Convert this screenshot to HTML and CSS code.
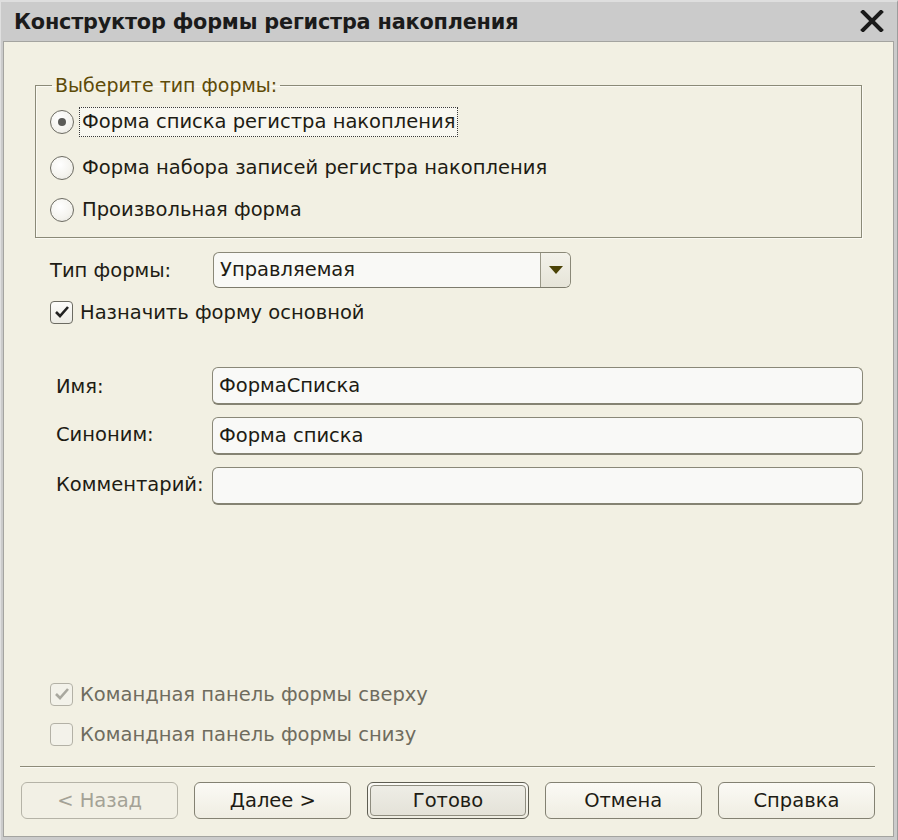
FILE: index.html
```html
<!DOCTYPE html>
<html lang="ru">
<head>
<meta charset="utf-8">
<title>Конструктор формы регистра накопления</title>
<link rel="stylesheet" href="styles.css">
</head>
<body>
<div class="window">
  <div class="titlebar">
    <span class="title">Конструктор формы регистра накопления</span>
    <svg class="close" width="24" height="22" viewBox="0 0 24 22"><path d="M3 2 L21 20 M21 2 L3 20" stroke="#1a1a1a" stroke-width="4" stroke-linecap="square"/></svg>
  </div>
  <div class="content">
    <fieldset class="group">
      <legend class="legend">Выберите тип формы:</legend>
      <div class="radio-row first">
        <span class="radio checked"></span>
        <span class="radio-label focus">Форма списка регистра накопления</span>
      </div>
      <div class="radio-row second">
        <span class="radio"></span>
        <span class="radio-label">Форма набора записей регистра накопления</span>
      </div>
      <div class="radio-row">
        <span class="radio"></span>
        <span class="radio-label">Произвольная форма</span>
      </div>
    </fieldset>

    <div class="type-row">
      <span class="type-label">Тип формы:</span>
      <div class="select">
        <span class="select-value">Управляемая</span>
        <span class="select-btn"><svg width="16" height="10" viewBox="0 0 16 10"><path d="M1 1 H15 L8 9 Z" fill="#4b4306"/></svg></span>
      </div>
    </div>

    <div class="check-row main-check">
      <span class="checkbox"><svg width="16" height="14" viewBox="0 0 16 14"><path d="M2 7 L6 11 L14 2" fill="none" stroke="#222" stroke-width="2.6"/></svg></span>
      <span class="check-label">Назначить форму основной</span>
    </div>

    <div class="fields">
      <div class="field-row">
        <span class="field-label">Имя:</span>
        <div class="input">ФормаСписка</div>
      </div>
      <div class="field-row">
        <span class="field-label up">Синоним:</span>
        <div class="input">Форма списка</div>
      </div>
      <div class="field-row">
        <span class="field-label up">Комментарий:</span>
        <div class="input"></div>
      </div>
    </div>

    <div class="spacer"></div>

    <div class="check-row disabled">
      <span class="checkbox"><svg width="16" height="14" viewBox="0 0 16 14"><path d="M2 7 L6 11 L14 2" fill="none" stroke="#a9a89f" stroke-width="2.6"/></svg></span>
      <span class="check-label">Командная панель формы сверху</span>
    </div>
    <div class="check-row disabled second-dis">
      <span class="checkbox"></span>
      <span class="check-label">Командная панель формы снизу</span>
    </div>

    <div class="separator"></div>

    <div class="buttons">
      <span class="btn disabled-btn">&lt; Назад</span>
      <span class="btn">Далее &gt;</span>
      <span class="btn default"><span class="btn-inner">Готово</span></span>
      <span class="btn">Отмена</span>
      <span class="btn">Справка</span>
    </div>
  </div>
</div>
</body>
</html>
```

FILE: styles.css
```css
html, body {
  margin: 0;
  padding: 0;
}
body {
  background: #d4d4d4;
  font-family: "DejaVu Sans", "Liberation Sans", sans-serif;
  color: #1e1c14;
}
.window {
  height: 840px;
  box-sizing: border-box;
  display: flex;
  flex-direction: column;
  padding: 0 3px 3px 2px;
  background: #cbcbcb;
  border-top: 2px solid #dedede;
  border-left: 1px solid #e0e0e0;
  border-right: 1px solid #9c9c9c;
}
.titlebar {
  height: 39px;
  display: flex;
  align-items: center;
  justify-content: space-between;
  padding: 0 10px 0 11px;
}
.title {
  font-weight: bold;
  font-size: 20.8px;
  color: #1b1b1b;
  letter-spacing: -0.2px;
}
.close {
  margin-top: -1px;
}
.content {
  flex: 1;
  display: flex;
  flex-direction: column;
  background: #f2f0e3;
  border: 1px solid #a4a4a0;
  padding: 0 0 17px 0;
}
.group {
  margin: 32px 31px 0 31px;
  padding: 11px 14px 12px 14px;
  border: 1px solid #8b8a78;
  box-shadow: inset 1px 1px 0 #fbfaf3, 1px 1px 0 #fbfaf3;
  min-width: 0;
}
.legend {
  margin-left: 2px;
  padding: 0 3px;
  font-size: 19px;
  line-height: 22px;
  color: #5e4b08;
}
.radio-row {
  display: flex;
  align-items: center;
  height: 30px;
  gap: 5px;
}
.radio-row.first {
  margin-bottom: 16px;
}
.radio-row.second {
  margin-bottom: 12px;
}
.radio {
  width: 22px;
  height: 22px;
  border-radius: 50%;
  border: 1px solid #6c6b62;
  background: radial-gradient(circle at 40% 35%, #ffffff 0%, #f4f3ee 60%, #e2e1da 100%);
  display: flex;
  align-items: center;
  justify-content: center;
  flex: none;
}
.radio.checked::after {
  content: "";
  width: 8px;
  height: 8px;
  border-radius: 50%;
  background: #5b5b58;
}
.radio-label {
  font-size: 19.5px;
  line-height: 26px;
  padding: 1px 2px;
  border: 1px solid transparent;
}
.radio-label.focus {
  border: 1px dotted #3a3a3a;
  background: #f8f7f0;
}
.type-row {
  display: flex;
  align-items: center;
  margin: 14px 0 0 46px;
}
.type-label {
  width: 163px;
  font-size: 19.5px;
}
.select {
  width: 356px;
  height: 34px;
  display: flex;
  border: 1px solid #8a8878;
  border-bottom-color: #7d7b6c;
  border-radius: 6px;
  background: #f9f9f6;
  overflow: hidden;
}
.select-value {
  flex: 1;
  font-size: 19.5px;
  line-height: 34px;
  padding-left: 6px;
}
.select-btn {
  width: 29px;
  border-left: 1px solid #9a9888;
  background: linear-gradient(#f3f2ea, #e6e4d8);
  display: flex;
  align-items: center;
  justify-content: center;
}
.check-row {
  display: flex;
  align-items: center;
  gap: 7px;
  margin-left: 46px;
  height: 26px;
}
.main-check {
  margin-top: 11px;
}
.checkbox {
  width: 21px;
  height: 21px;
  border: 1px solid #6c6b62;
  border-radius: 4px;
  background: linear-gradient(#fdfdfb, #ecebe4);
  display: flex;
  align-items: center;
  justify-content: center;
  flex: none;
}
.check-label {
  font-size: 19.5px;
}
.fields {
  display: flex;
  flex-direction: column;
  gap: 12px;
  margin: 42px 30px 0 52px;
}
.field-row {
  display: flex;
  align-items: center;
}
.field-label {
  width: 156px;
  font-size: 19.5px;
}
.field-label.up {
  margin-top: -3px;
}
.input {
  flex: 1;
  box-sizing: border-box;
  height: 38px;
  border: 1px solid #8a8878;
  border-bottom: 2px solid #858373;
  border-radius: 6px;
  background: #f9f9f7;
  font-size: 19.5px;
  line-height: 35px;
  padding-left: 6px;
}
.spacer {
  flex: 1;
}
.check-row.disabled .checkbox {
  border-color: #b3b1a6;
  background: #f3f2ea;
}
.check-row.disabled .check-label {
  color: #6f6c5e;
}
.second-dis {
  margin-top: 14px;
}
.separator {
  margin: 19px 18px 0 16px;
  height: 1px;
  background: #8d8b79;
  border-bottom: 1px solid #fbfaf3;
}
.buttons {
  display: flex;
  gap: 16px;
  margin: 14px 18px 0 17px;
}
.btn {
  flex: 1;
  height: 37px;
  box-sizing: border-box;
  border: 1px solid #838172;
  border-radius: 6px;
  background: linear-gradient(#fbfaf5, #efede2);
  display: flex;
  align-items: center;
  justify-content: center;
  font-size: 19.5px;
  color: #1e1c14;
}
.btn.disabled-btn {
  border-color: #b5b3a7;
  color: #a4a296;
  background: #f2f0e5;
}
.btn.default {
  padding: 2px;
  border-color: #5e5d52;
}
.btn-inner {
  flex: 1;
  align-self: stretch;
  display: flex;
  align-items: center;
  justify-content: center;
  border: 1px solid #8e8c7f;
  border-radius: 4px;
  background: linear-gradient(#eeede6, #e4e2d8);
}
```
